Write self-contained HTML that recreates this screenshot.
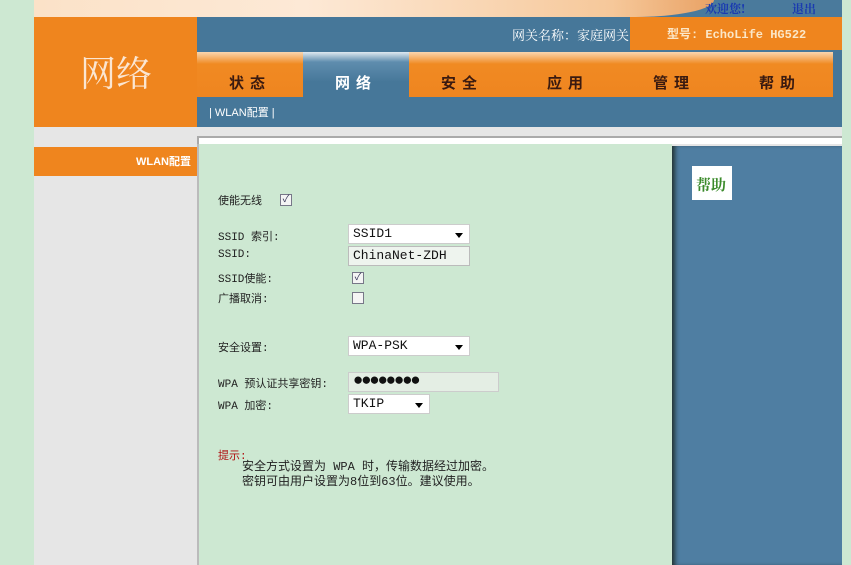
<!DOCTYPE html>
<html><head><meta charset="utf-8"><style>
*{margin:0;padding:0;box-sizing:border-box}
body{width:851px;height:565px;background:#cde8d2;position:relative;overflow:hidden;font-family:"Liberation Sans","Noto Sans CJK SC",sans-serif}
.a{position:absolute}
.cn{font-family:"Noto Serif CJK SC","Noto Sans CJK SC",serif}
.lbl{position:absolute;left:218px;font-size:11px;color:#222;font-family:"Liberation Mono","Noto Sans CJK SC",monospace}
.inp{position:absolute;background:#fff;border:1px solid #ccc;font-family:"Liberation Mono",monospace;font-size:13px;padding:1px 0 0 4px;height:20px;color:#111}
.sel:after{content:"";position:absolute;right:6px;top:8px;border:4px solid transparent;border-top:5px solid #000}
.cb{position:absolute;width:12px;height:12px;border:1px solid #778;background:#f4f4f4;font-size:10px;line-height:10px;text-align:center;color:#335}
.tab{position:absolute;top:52px;width:106px;height:45px;background:linear-gradient(#f9d6b0 0,#f08a22 12px,#ef8520);font-size:15px;font-weight:bold;color:#3a1a10;text-align:center;padding-top:20px;letter-spacing:6px}
</style></head><body>
<div class="a" style="left:34px;top:0;width:808px;height:17px;background:#4a7a9c"></div>
<div class="a" style="left:34px;top:0;width:680px;height:17px;background:linear-gradient(90deg,#fbe2c8,#fde9d6 40%,#f6c89a 85%,#e9a265);border-bottom-right-radius:80px 17px"></div>
<div class="a cn" style="left:705px;top:0px;font-size:12px;font-weight:bold;color:#1a3ab0">欢迎您!</div>
<div class="a cn" style="left:792px;top:0px;font-size:12px;font-weight:bold;color:#1a3ab0">退出</div>
<div class="a" style="left:34px;top:17px;width:163px;height:110px;background:#ef851e"></div>
<div class="a cn" style="left:80px;top:46px;font-size:36px;color:#fbe6d2">网络</div>
<div class="a" style="left:197px;top:17px;width:645px;height:110px;background:#467799"></div>
<div class="a cn" style="left:512px;top:25px;font-size:13px;color:#fff">网关名称：家庭网关</div>
<div class="a" style="left:630px;top:17px;width:212px;height:33px;background:#ef851e"></div>
<div class="a" style="left:667px;top:25px;font-size:12px;font-weight:bold;color:#fbe7c8;font-family:'Liberation Mono','Noto Sans CJK SC',monospace">型号: EchoLife HG522</div>
<div class="tab" style="left:197px">状态</div>
<div class="tab" style="left:303px;background:linear-gradient(#dfe9f0 0,#5f8dae 10px,#467799 30px);color:#fff">网络</div>
<div class="tab" style="left:409px">安全</div>
<div class="tab" style="left:515px">应用</div>
<div class="tab" style="left:621px">管理</div>
<div class="tab" style="left:727px;width:106px">帮助</div>
<div class="a" style="left:209px;top:104px;font-size:11px;color:#fff">| WLAN配置 |</div>
<div class="a" style="left:34px;top:127px;width:808px;height:19px;background:#e6e6e6"></div>
<div class="a" style="left:197px;top:136px;width:645px;height:8px;background:#fff;border-top:2px solid #aaa;border-left:2px solid #aaa"></div>
<div class="a" style="left:34px;top:146px;width:163px;height:419px;background:#e6e6e6"></div>
<div class="a" style="left:34px;top:147px;width:163px;height:29px;background:#ef851e"></div>
<div class="a" style="left:136px;top:153px;font-size:11px;font-weight:bold;color:#fff">WLAN配置</div>
<div class="a" style="left:197px;top:144px;width:475px;height:421px;background:#cde8d2;border-left:2px solid #bbb"></div>
<div class="a" style="left:672px;top:146px;width:170px;height:419px;background:#4f7ea2;box-shadow:inset 5px 0 5px -2px #233"></div>
<div class="a" style="left:692px;top:166px;width:40px;height:34px;background:#fff"></div>
<div class="a cn" style="left:696px;top:174px;font-size:15px;font-weight:bold;color:#3a8a2a">帮助</div>

<div class="lbl" style="top:192px">使能无线</div><div class="cb" style="left:280px;top:194px">✓</div>
<div class="lbl" style="top:228px">SSID 索引:</div><div class="inp sel" style="left:348px;top:224px;width:122px">SSID1</div>
<div class="lbl" style="top:249px">SSID:</div><div class="inp" style="left:348px;top:246px;width:122px;border-color:#bbb;background:#eef4ee">ChinaNet-ZDH</div>
<div class="lbl" style="top:270px">SSID使能:</div><div class="cb" style="left:352px;top:272px">✓</div>
<div class="lbl" style="top:290px">广播取消:</div><div class="cb" style="left:352px;top:292px"></div>
<div class="lbl" style="top:339px">安全设置:</div><div class="inp sel" style="left:348px;top:336px;width:122px">WPA-PSK</div>
<div class="lbl" style="top:375px">WPA 预认证共享密钥:</div><div class="inp" style="left:348px;top:372px;width:151px;background:#e4eee4;font-size:17px;line-height:18px;letter-spacing:-2px;padding-top:0">●●●●●●●●</div>
<div class="lbl" style="top:397px">WPA 加密:</div><div class="inp sel" style="left:348px;top:394px;width:82px">TKIP</div>
<div class="lbl" style="top:447px;color:#b01010">提示:</div>
<div class="a" style="left:242px;top:460px;font-size:12px;color:#222;line-height:15px;font-family:'Liberation Mono','Noto Sans CJK SC',monospace">安全方式设置为 WPA 时，传输数据经过加密。<br>密钥可由用户设置为8位到63位。建议使用。</div>
</body></html>
